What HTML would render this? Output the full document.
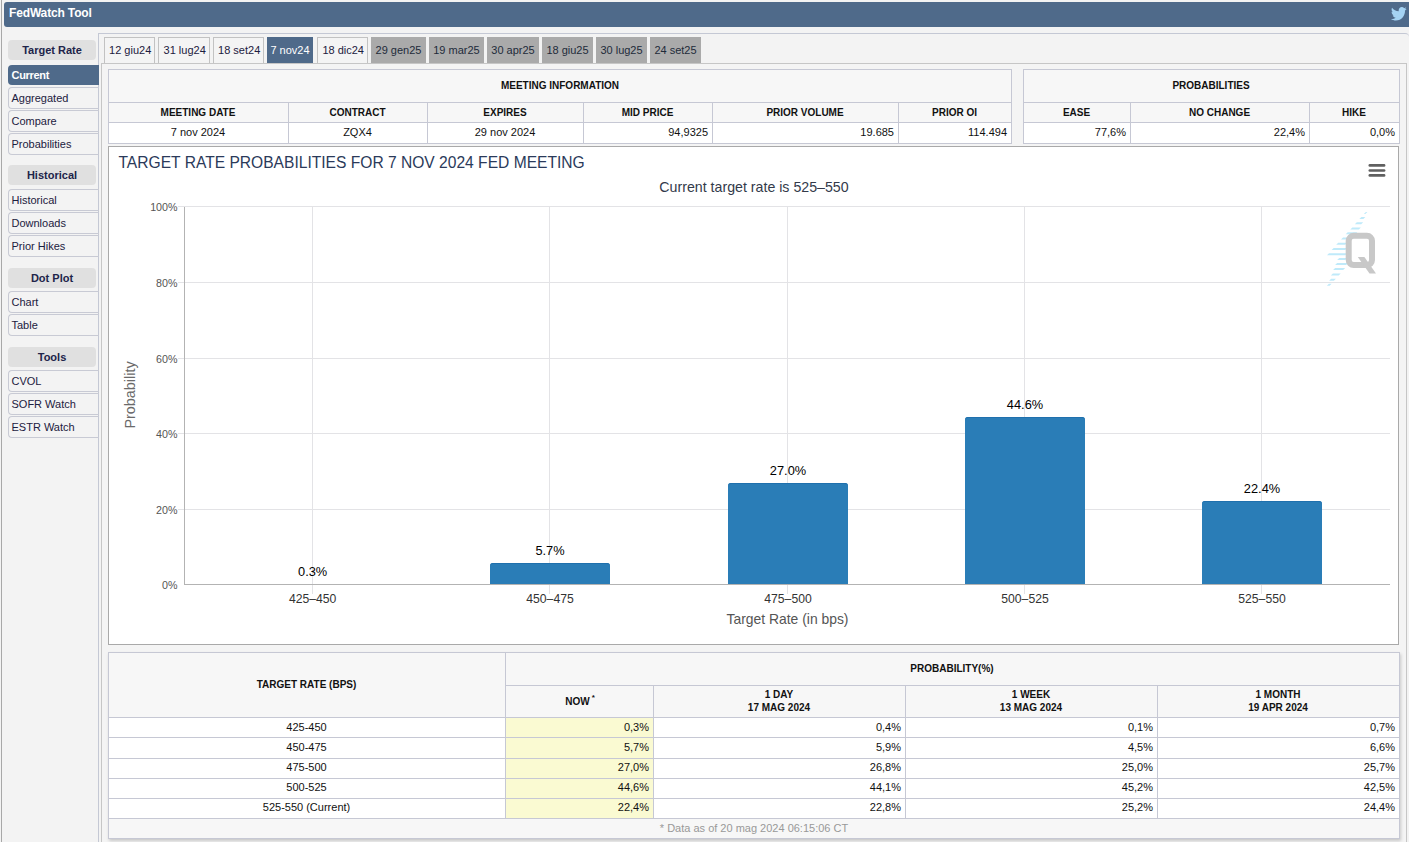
<!DOCTYPE html><html><head><meta charset="utf-8"><style>
html,body{margin:0;padding:0;}
body{width:1409px;height:842px;overflow:hidden;position:relative;background:#f3f3f3;font-family:"Liberation Sans",sans-serif;}
</style></head><body>
<div style="position:absolute;left:1px;top:0px;width:1px;height:842px;background:#a8a8a8"></div>
<div style="position:absolute;left:4px;top:2px;width:1405px;height:25px;background:#4f6a8a;border-radius:3px 0 0 3px"></div>
<div style="position:absolute;left:9.00px;top:-7.00px;width:400px;height:40px;line-height:40px;font-size:12px;font-weight:bold;color:#fff;text-align:left;white-space:nowrap;font-family:'Liberation Sans', sans-serif;letter-spacing:-0.15px">FedWatch Tool</div>
<svg style="position:absolute;left:1391px;top:7px" width="16" height="14" viewBox="0 0 24 20" preserveAspectRatio="none"><path fill="#a5d3f3" d="M23.6 2.4c-.9.4-1.8.6-2.8.8 1-.6 1.8-1.5 2.1-2.7-.9.6-2 1-3.1 1.2C18.9.7 17.6.1 16.3.1c-2.7 0-4.8 2.2-4.8 4.8 0 .4 0 .8.1 1.1C7.5 5.8 4 3.9 1.6 1 1.2 1.7.9 2.6.9 3.5c0 1.7.9 3.2 2.2 4-.8 0-1.5-.2-2.2-.6v.1c0 2.3 1.7 4.3 3.9 4.7-.4.1-.8.2-1.3.2-.3 0-.6 0-.9-.1.6 1.9 2.4 3.4 4.5 3.4-1.7 1.3-3.7 2.1-6 2.1-.4 0-.8 0-1.2-.1 2.1 1.4 4.7 2.2 7.4 2.2 8.9 0 13.7-7.4 13.7-13.7v-.6c1-.7 1.8-1.6 2.5-2.5z"/></svg>
<div style="position:absolute;left:98px;top:33px;width:1311px;height:900px;box-sizing:border-box;border:1px solid #c4c8d4;border-right:none;border-radius:0 4px 0 0"></div>
<div style="position:absolute;left:8px;top:40px;width:88px;height:20px;background:#e0e0e0;border-radius:4px"></div>
<div style="position:absolute;left:8.00px;top:30.00px;width:88px;height:40px;line-height:40px;font-size:11px;font-weight:bold;color:#20244a;text-align:center;white-space:nowrap;font-family:'Liberation Sans', sans-serif;">Target Rate</div>
<div style="position:absolute;left:8px;top:65px;width:91px;height:20px;background:#4f6a8a;border-radius:4px 0 0 4px"></div>
<div style="position:absolute;left:11.50px;top:55.00px;width:400px;height:40px;line-height:40px;font-size:11px;font-weight:bold;color:#fff;text-align:left;white-space:nowrap;font-family:'Liberation Sans', sans-serif;letter-spacing:-0.3px">Current</div>
<div style="position:absolute;left:8px;top:87px;width:91px;height:22px;box-sizing:border-box;border:1px solid #c8cad4;border-right:none;border-radius:4px 0 0 4px"></div>
<div style="position:absolute;left:11.50px;top:78.00px;width:400px;height:40px;line-height:40px;font-size:11px;font-weight:normal;color:#1c2040;text-align:left;white-space:nowrap;font-family:'Liberation Sans', sans-serif;">Aggregated</div>
<div style="position:absolute;left:8px;top:110px;width:91px;height:22px;box-sizing:border-box;border:1px solid #c8cad4;border-right:none;border-radius:4px 0 0 4px"></div>
<div style="position:absolute;left:11.50px;top:101.00px;width:400px;height:40px;line-height:40px;font-size:11px;font-weight:normal;color:#1c2040;text-align:left;white-space:nowrap;font-family:'Liberation Sans', sans-serif;">Compare</div>
<div style="position:absolute;left:8px;top:133px;width:91px;height:22px;box-sizing:border-box;border:1px solid #c8cad4;border-right:none;border-radius:4px 0 0 4px"></div>
<div style="position:absolute;left:11.50px;top:124.00px;width:400px;height:40px;line-height:40px;font-size:11px;font-weight:normal;color:#1c2040;text-align:left;white-space:nowrap;font-family:'Liberation Sans', sans-serif;">Probabilities</div>
<div style="position:absolute;left:8px;top:165px;width:88px;height:20px;background:#e0e0e0;border-radius:4px"></div>
<div style="position:absolute;left:8.00px;top:155.00px;width:88px;height:40px;line-height:40px;font-size:11px;font-weight:bold;color:#20244a;text-align:center;white-space:nowrap;font-family:'Liberation Sans', sans-serif;">Historical</div>
<div style="position:absolute;left:8px;top:189px;width:91px;height:22px;box-sizing:border-box;border:1px solid #c8cad4;border-right:none;border-radius:4px 0 0 4px"></div>
<div style="position:absolute;left:11.50px;top:180.00px;width:400px;height:40px;line-height:40px;font-size:11px;font-weight:normal;color:#1c2040;text-align:left;white-space:nowrap;font-family:'Liberation Sans', sans-serif;">Historical</div>
<div style="position:absolute;left:8px;top:212px;width:91px;height:22px;box-sizing:border-box;border:1px solid #c8cad4;border-right:none;border-radius:4px 0 0 4px"></div>
<div style="position:absolute;left:11.50px;top:203.00px;width:400px;height:40px;line-height:40px;font-size:11px;font-weight:normal;color:#1c2040;text-align:left;white-space:nowrap;font-family:'Liberation Sans', sans-serif;">Downloads</div>
<div style="position:absolute;left:8px;top:235px;width:91px;height:22px;box-sizing:border-box;border:1px solid #c8cad4;border-right:none;border-radius:4px 0 0 4px"></div>
<div style="position:absolute;left:11.50px;top:226.00px;width:400px;height:40px;line-height:40px;font-size:11px;font-weight:normal;color:#1c2040;text-align:left;white-space:nowrap;font-family:'Liberation Sans', sans-serif;">Prior Hikes</div>
<div style="position:absolute;left:8px;top:268px;width:88px;height:20px;background:#e0e0e0;border-radius:4px"></div>
<div style="position:absolute;left:8.00px;top:258.00px;width:88px;height:40px;line-height:40px;font-size:11px;font-weight:bold;color:#20244a;text-align:center;white-space:nowrap;font-family:'Liberation Sans', sans-serif;">Dot Plot</div>
<div style="position:absolute;left:8px;top:291px;width:91px;height:22px;box-sizing:border-box;border:1px solid #c8cad4;border-right:none;border-radius:4px 0 0 4px"></div>
<div style="position:absolute;left:11.50px;top:282.00px;width:400px;height:40px;line-height:40px;font-size:11px;font-weight:normal;color:#1c2040;text-align:left;white-space:nowrap;font-family:'Liberation Sans', sans-serif;">Chart</div>
<div style="position:absolute;left:8px;top:314px;width:91px;height:22px;box-sizing:border-box;border:1px solid #c8cad4;border-right:none;border-radius:4px 0 0 4px"></div>
<div style="position:absolute;left:11.50px;top:305.00px;width:400px;height:40px;line-height:40px;font-size:11px;font-weight:normal;color:#1c2040;text-align:left;white-space:nowrap;font-family:'Liberation Sans', sans-serif;">Table</div>
<div style="position:absolute;left:8px;top:347px;width:88px;height:20px;background:#e0e0e0;border-radius:4px"></div>
<div style="position:absolute;left:8.00px;top:337.00px;width:88px;height:40px;line-height:40px;font-size:11px;font-weight:bold;color:#20244a;text-align:center;white-space:nowrap;font-family:'Liberation Sans', sans-serif;">Tools</div>
<div style="position:absolute;left:8px;top:370px;width:91px;height:22px;box-sizing:border-box;border:1px solid #c8cad4;border-right:none;border-radius:4px 0 0 4px"></div>
<div style="position:absolute;left:11.50px;top:361.00px;width:400px;height:40px;line-height:40px;font-size:11px;font-weight:normal;color:#1c2040;text-align:left;white-space:nowrap;font-family:'Liberation Sans', sans-serif;">CVOL</div>
<div style="position:absolute;left:8px;top:393px;width:91px;height:22px;box-sizing:border-box;border:1px solid #c8cad4;border-right:none;border-radius:4px 0 0 4px"></div>
<div style="position:absolute;left:11.50px;top:384.00px;width:400px;height:40px;line-height:40px;font-size:11px;font-weight:normal;color:#1c2040;text-align:left;white-space:nowrap;font-family:'Liberation Sans', sans-serif;">SOFR Watch</div>
<div style="position:absolute;left:8px;top:416px;width:91px;height:22px;box-sizing:border-box;border:1px solid #c8cad4;border-right:none;border-radius:4px 0 0 4px"></div>
<div style="position:absolute;left:11.50px;top:407.00px;width:400px;height:40px;line-height:40px;font-size:11px;font-weight:normal;color:#1c2040;text-align:left;white-space:nowrap;font-family:'Liberation Sans', sans-serif;">ESTR Watch</div>
<div style="position:absolute;left:101px;top:63px;width:1306px;height:900px;box-sizing:border-box;border:1px solid #c6c6c6;background:#f4f4f4"></div>
<div style="position:absolute;left:104px;top:37px;width:51px;height:26px;box-sizing:border-box;border:1px solid #c2c2c2;border-bottom:none;background:#f4f4f4"></div>
<div style="position:absolute;left:104.70px;top:30.00px;width:51px;height:40px;line-height:40px;font-size:11px;font-weight:normal;color:#1c2040;text-align:center;white-space:nowrap;font-family:'Liberation Sans', sans-serif;">12 giu24</div>
<div style="position:absolute;left:158px;top:37px;width:52px;height:26px;box-sizing:border-box;border:1px solid #c2c2c2;border-bottom:none;background:#f4f4f4"></div>
<div style="position:absolute;left:158.70px;top:30.00px;width:52px;height:40px;line-height:40px;font-size:11px;font-weight:normal;color:#1c2040;text-align:center;white-space:nowrap;font-family:'Liberation Sans', sans-serif;">31 lug24</div>
<div style="position:absolute;left:213px;top:37px;width:51px;height:26px;box-sizing:border-box;border:1px solid #c2c2c2;border-bottom:none;background:#f4f4f4"></div>
<div style="position:absolute;left:213.70px;top:30.00px;width:51px;height:40px;line-height:40px;font-size:11px;font-weight:normal;color:#1c2040;text-align:center;white-space:nowrap;font-family:'Liberation Sans', sans-serif;">18 set24</div>
<div style="position:absolute;left:267px;top:37px;width:46px;height:26px;background:#4f6a8a"></div>
<div style="position:absolute;left:267.00px;top:30.00px;width:46px;height:40px;line-height:40px;font-size:11px;font-weight:normal;color:#fff;text-align:center;white-space:nowrap;font-family:'Liberation Sans', sans-serif;">7 nov24</div>
<div style="position:absolute;left:317px;top:37px;width:51px;height:26px;box-sizing:border-box;border:1px solid #c2c2c2;border-bottom:none;background:#f4f4f4"></div>
<div style="position:absolute;left:317.70px;top:30.00px;width:51px;height:40px;line-height:40px;font-size:11px;font-weight:normal;color:#1c2040;text-align:center;white-space:nowrap;font-family:'Liberation Sans', sans-serif;">18 dic24</div>
<div style="position:absolute;left:371px;top:37px;width:55px;height:26px;background:#aaaaaa"></div>
<div style="position:absolute;left:371.00px;top:30.00px;width:55px;height:40px;line-height:40px;font-size:11px;font-weight:normal;color:#1e2a3a;text-align:center;white-space:nowrap;font-family:'Liberation Sans', sans-serif;">29 gen25</div>
<div style="position:absolute;left:429px;top:37px;width:55px;height:26px;background:#aaaaaa"></div>
<div style="position:absolute;left:429.00px;top:30.00px;width:55px;height:40px;line-height:40px;font-size:11px;font-weight:normal;color:#1e2a3a;text-align:center;white-space:nowrap;font-family:'Liberation Sans', sans-serif;">19 mar25</div>
<div style="position:absolute;left:487px;top:37px;width:52px;height:26px;background:#aaaaaa"></div>
<div style="position:absolute;left:487.00px;top:30.00px;width:52px;height:40px;line-height:40px;font-size:11px;font-weight:normal;color:#1e2a3a;text-align:center;white-space:nowrap;font-family:'Liberation Sans', sans-serif;">30 apr25</div>
<div style="position:absolute;left:542px;top:37px;width:51px;height:26px;background:#aaaaaa"></div>
<div style="position:absolute;left:542.00px;top:30.00px;width:51px;height:40px;line-height:40px;font-size:11px;font-weight:normal;color:#1e2a3a;text-align:center;white-space:nowrap;font-family:'Liberation Sans', sans-serif;">18 giu25</div>
<div style="position:absolute;left:596px;top:37px;width:51px;height:26px;background:#aaaaaa"></div>
<div style="position:absolute;left:596.00px;top:30.00px;width:51px;height:40px;line-height:40px;font-size:11px;font-weight:normal;color:#1e2a3a;text-align:center;white-space:nowrap;font-family:'Liberation Sans', sans-serif;">30 lug25</div>
<div style="position:absolute;left:650px;top:37px;width:51px;height:26px;background:#aaaaaa"></div>
<div style="position:absolute;left:650.00px;top:30.00px;width:51px;height:40px;line-height:40px;font-size:11px;font-weight:normal;color:#1e2a3a;text-align:center;white-space:nowrap;font-family:'Liberation Sans', sans-serif;">24 set25</div>
<div style="position:absolute;left:108px;top:69px;width:904px;height:75px;background:#f7f7f7"></div>
<div style="position:absolute;left:109px;top:123px;width:902px;height:20px;background:#fff"></div>
<div style="position:absolute;left:108px;top:69px;width:904px;height:1px;background:#c6c8d4"></div>
<div style="position:absolute;left:108px;top:102px;width:904px;height:1px;background:#c6c8d4"></div>
<div style="position:absolute;left:108px;top:122px;width:904px;height:1px;background:#c6c8d4"></div>
<div style="position:absolute;left:108px;top:143px;width:904px;height:1px;background:#c6c8d4"></div>
<div style="position:absolute;left:108px;top:69px;width:1px;height:75px;background:#c6c8d4"></div>
<div style="position:absolute;left:1011px;top:69px;width:1px;height:75px;background:#c6c8d4"></div>
<div style="position:absolute;left:288px;top:102px;width:1px;height:42px;background:#c6c8d4"></div>
<div style="position:absolute;left:427px;top:102px;width:1px;height:42px;background:#c6c8d4"></div>
<div style="position:absolute;left:583px;top:102px;width:1px;height:42px;background:#c6c8d4"></div>
<div style="position:absolute;left:712px;top:102px;width:1px;height:42px;background:#c6c8d4"></div>
<div style="position:absolute;left:898px;top:102px;width:1px;height:42px;background:#c6c8d4"></div>
<div style="position:absolute;left:360.00px;top:65.50px;width:400px;height:40px;line-height:40px;font-size:10px;font-weight:bold;color:#111;text-align:center;white-space:nowrap;font-family:'Liberation Sans', sans-serif;">MEETING INFORMATION</div>
<div style="position:absolute;left:-2.00px;top:92.50px;width:400px;height:40px;line-height:40px;font-size:10px;font-weight:bold;color:#111;text-align:center;white-space:nowrap;font-family:'Liberation Sans', sans-serif;">MEETING DATE</div>
<div style="position:absolute;left:-2.00px;top:112.00px;width:400px;height:40px;line-height:40px;font-size:11px;font-weight:normal;color:#111;text-align:center;white-space:nowrap;font-family:'Liberation Sans', sans-serif;">7 nov 2024</div>
<div style="position:absolute;left:157.50px;top:92.50px;width:400px;height:40px;line-height:40px;font-size:10px;font-weight:bold;color:#111;text-align:center;white-space:nowrap;font-family:'Liberation Sans', sans-serif;">CONTRACT</div>
<div style="position:absolute;left:157.50px;top:112.00px;width:400px;height:40px;line-height:40px;font-size:11px;font-weight:normal;color:#111;text-align:center;white-space:nowrap;font-family:'Liberation Sans', sans-serif;">ZQX4</div>
<div style="position:absolute;left:305.00px;top:92.50px;width:400px;height:40px;line-height:40px;font-size:10px;font-weight:bold;color:#111;text-align:center;white-space:nowrap;font-family:'Liberation Sans', sans-serif;">EXPIRES</div>
<div style="position:absolute;left:305.00px;top:112.00px;width:400px;height:40px;line-height:40px;font-size:11px;font-weight:normal;color:#111;text-align:center;white-space:nowrap;font-family:'Liberation Sans', sans-serif;">29 nov 2024</div>
<div style="position:absolute;left:447.50px;top:92.50px;width:400px;height:40px;line-height:40px;font-size:10px;font-weight:bold;color:#111;text-align:center;white-space:nowrap;font-family:'Liberation Sans', sans-serif;">MID PRICE</div>
<div style="position:absolute;left:308.00px;top:112.00px;width:400px;height:40px;line-height:40px;font-size:11px;font-weight:normal;color:#111;text-align:right;white-space:nowrap;font-family:'Liberation Sans', sans-serif;">94,9325</div>
<div style="position:absolute;left:605.00px;top:92.50px;width:400px;height:40px;line-height:40px;font-size:10px;font-weight:bold;color:#111;text-align:center;white-space:nowrap;font-family:'Liberation Sans', sans-serif;">PRIOR VOLUME</div>
<div style="position:absolute;left:494.00px;top:112.00px;width:400px;height:40px;line-height:40px;font-size:11px;font-weight:normal;color:#111;text-align:right;white-space:nowrap;font-family:'Liberation Sans', sans-serif;">19.685</div>
<div style="position:absolute;left:754.50px;top:92.50px;width:400px;height:40px;line-height:40px;font-size:10px;font-weight:bold;color:#111;text-align:center;white-space:nowrap;font-family:'Liberation Sans', sans-serif;">PRIOR OI</div>
<div style="position:absolute;left:607.00px;top:112.00px;width:400px;height:40px;line-height:40px;font-size:11px;font-weight:normal;color:#111;text-align:right;white-space:nowrap;font-family:'Liberation Sans', sans-serif;">114.494</div>
<div style="position:absolute;left:1023px;top:69px;width:377px;height:75px;background:#f7f7f7"></div>
<div style="position:absolute;left:1024px;top:123px;width:375px;height:20px;background:#fff"></div>
<div style="position:absolute;left:1023px;top:69px;width:377px;height:1px;background:#c6c8d4"></div>
<div style="position:absolute;left:1023px;top:102px;width:377px;height:1px;background:#c6c8d4"></div>
<div style="position:absolute;left:1023px;top:122px;width:377px;height:1px;background:#c6c8d4"></div>
<div style="position:absolute;left:1023px;top:143px;width:377px;height:1px;background:#c6c8d4"></div>
<div style="position:absolute;left:1023px;top:69px;width:1px;height:75px;background:#c6c8d4"></div>
<div style="position:absolute;left:1399px;top:69px;width:1px;height:75px;background:#c6c8d4"></div>
<div style="position:absolute;left:1130px;top:102px;width:1px;height:42px;background:#c6c8d4"></div>
<div style="position:absolute;left:1309px;top:102px;width:1px;height:42px;background:#c6c8d4"></div>
<div style="position:absolute;left:1011.00px;top:65.50px;width:400px;height:40px;line-height:40px;font-size:10px;font-weight:bold;color:#111;text-align:center;white-space:nowrap;font-family:'Liberation Sans', sans-serif;">PROBABILITIES</div>
<div style="position:absolute;left:876.50px;top:92.50px;width:400px;height:40px;line-height:40px;font-size:10px;font-weight:bold;color:#111;text-align:center;white-space:nowrap;font-family:'Liberation Sans', sans-serif;">EASE</div>
<div style="position:absolute;left:726.00px;top:112.00px;width:400px;height:40px;line-height:40px;font-size:11px;font-weight:normal;color:#111;text-align:right;white-space:nowrap;font-family:'Liberation Sans', sans-serif;">77,6%</div>
<div style="position:absolute;left:1019.50px;top:92.50px;width:400px;height:40px;line-height:40px;font-size:10px;font-weight:bold;color:#111;text-align:center;white-space:nowrap;font-family:'Liberation Sans', sans-serif;">NO CHANGE</div>
<div style="position:absolute;left:905.00px;top:112.00px;width:400px;height:40px;line-height:40px;font-size:11px;font-weight:normal;color:#111;text-align:right;white-space:nowrap;font-family:'Liberation Sans', sans-serif;">22,4%</div>
<div style="position:absolute;left:1154.00px;top:92.50px;width:400px;height:40px;line-height:40px;font-size:10px;font-weight:bold;color:#111;text-align:center;white-space:nowrap;font-family:'Liberation Sans', sans-serif;">HIKE</div>
<div style="position:absolute;left:995.00px;top:112.00px;width:400px;height:40px;line-height:40px;font-size:11px;font-weight:normal;color:#111;text-align:right;white-space:nowrap;font-family:'Liberation Sans', sans-serif;">0,0%</div>
<div style="position:absolute;left:108px;top:146px;width:1291px;height:499px;box-sizing:border-box;border:1px solid #a9a9a9;background:#fff"></div>
<div style="position:absolute;left:178px;top:206px;width:1212px;height:1px;background:#e3e3e6"></div>
<div style="position:absolute;left:178px;top:282px;width:1212px;height:1px;background:#e3e3e6"></div>
<div style="position:absolute;left:178px;top:358px;width:1212px;height:1px;background:#e3e3e6"></div>
<div style="position:absolute;left:178px;top:433px;width:1212px;height:1px;background:#e3e3e6"></div>
<div style="position:absolute;left:178px;top:509px;width:1212px;height:1px;background:#e3e3e6"></div>
<div style="position:absolute;left:312px;top:207px;width:1px;height:387px;background:#e3e3e6"></div>
<div style="position:absolute;left:549px;top:207px;width:1px;height:387px;background:#e3e3e6"></div>
<div style="position:absolute;left:787px;top:207px;width:1px;height:387px;background:#e3e3e6"></div>
<div style="position:absolute;left:1024px;top:207px;width:1px;height:387px;background:#e3e3e6"></div>
<div style="position:absolute;left:1261px;top:207px;width:1px;height:387px;background:#e3e3e6"></div>
<div style="position:absolute;left:184px;top:207px;width:1px;height:378px;background:#b3b3b3"></div>
<div style="position:absolute;left:184px;top:584px;width:1206px;height:1px;background:#b3b3b3"></div>
<div style="position:absolute;left:-222.50px;top:186.50px;width:400px;height:40px;line-height:40px;font-size:10.7px;font-weight:normal;color:#555;text-align:right;white-space:nowrap;font-family:'Liberation Sans', sans-serif;">100%</div>
<div style="position:absolute;left:-222.50px;top:262.50px;width:400px;height:40px;line-height:40px;font-size:10.7px;font-weight:normal;color:#555;text-align:right;white-space:nowrap;font-family:'Liberation Sans', sans-serif;">80%</div>
<div style="position:absolute;left:-222.50px;top:338.50px;width:400px;height:40px;line-height:40px;font-size:10.7px;font-weight:normal;color:#555;text-align:right;white-space:nowrap;font-family:'Liberation Sans', sans-serif;">60%</div>
<div style="position:absolute;left:-222.50px;top:413.50px;width:400px;height:40px;line-height:40px;font-size:10.7px;font-weight:normal;color:#555;text-align:right;white-space:nowrap;font-family:'Liberation Sans', sans-serif;">40%</div>
<div style="position:absolute;left:-222.50px;top:489.50px;width:400px;height:40px;line-height:40px;font-size:10.7px;font-weight:normal;color:#555;text-align:right;white-space:nowrap;font-family:'Liberation Sans', sans-serif;">20%</div>
<div style="position:absolute;left:-222.50px;top:564.50px;width:400px;height:40px;line-height:40px;font-size:10.7px;font-weight:normal;color:#555;text-align:right;white-space:nowrap;font-family:'Liberation Sans', sans-serif;">0%</div>
<div style="position:absolute;left:112.67px;top:551.60px;width:400px;height:40px;line-height:40px;font-size:12.8px;font-weight:normal;color:#000;text-align:center;white-space:nowrap;font-family:'Liberation Sans', sans-serif;">0.3%</div>
<div style="position:absolute;left:490px;top:563px;width:120px;height:21px;background:#2a7db7;border-radius:3px 3px 0 0;box-shadow:inset 0 1px 0 #1f70ad"></div>
<div style="position:absolute;left:350.00px;top:531.20px;width:400px;height:40px;line-height:40px;font-size:12.8px;font-weight:normal;color:#000;text-align:center;white-space:nowrap;font-family:'Liberation Sans', sans-serif;">5.7%</div>
<div style="position:absolute;left:728px;top:483px;width:120px;height:101px;background:#2a7db7;border-radius:3px 3px 0 0;box-shadow:inset 0 1px 0 #1f70ad"></div>
<div style="position:absolute;left:588.00px;top:451.40px;width:400px;height:40px;line-height:40px;font-size:12.8px;font-weight:normal;color:#000;text-align:center;white-space:nowrap;font-family:'Liberation Sans', sans-serif;">27.0%</div>
<div style="position:absolute;left:965px;top:417px;width:120px;height:167px;background:#2a7db7;border-radius:3px 3px 0 0;box-shadow:inset 0 1px 0 #1f70ad"></div>
<div style="position:absolute;left:825.00px;top:385.20px;width:400px;height:40px;line-height:40px;font-size:12.8px;font-weight:normal;color:#000;text-align:center;white-space:nowrap;font-family:'Liberation Sans', sans-serif;">44.6%</div>
<div style="position:absolute;left:1202px;top:501px;width:120px;height:83px;background:#2a7db7;border-radius:3px 3px 0 0;box-shadow:inset 0 1px 0 #1f70ad"></div>
<div style="position:absolute;left:1062.00px;top:468.80px;width:400px;height:40px;line-height:40px;font-size:12.8px;font-weight:normal;color:#000;text-align:center;white-space:nowrap;font-family:'Liberation Sans', sans-serif;">22.4%</div>
<div style="position:absolute;left:112.67px;top:579.30px;width:400px;height:40px;line-height:40px;font-size:12.2px;font-weight:normal;color:#333;text-align:center;white-space:nowrap;font-family:'Liberation Sans', sans-serif;">425–450</div>
<div style="position:absolute;left:350.00px;top:579.30px;width:400px;height:40px;line-height:40px;font-size:12.2px;font-weight:normal;color:#333;text-align:center;white-space:nowrap;font-family:'Liberation Sans', sans-serif;">450–475</div>
<div style="position:absolute;left:588.00px;top:579.30px;width:400px;height:40px;line-height:40px;font-size:12.2px;font-weight:normal;color:#333;text-align:center;white-space:nowrap;font-family:'Liberation Sans', sans-serif;">475–500</div>
<div style="position:absolute;left:825.00px;top:579.30px;width:400px;height:40px;line-height:40px;font-size:12.2px;font-weight:normal;color:#333;text-align:center;white-space:nowrap;font-family:'Liberation Sans', sans-serif;">500–525</div>
<div style="position:absolute;left:1062.00px;top:579.30px;width:400px;height:40px;line-height:40px;font-size:12.2px;font-weight:normal;color:#333;text-align:center;white-space:nowrap;font-family:'Liberation Sans', sans-serif;">525–550</div>
<div style="position:absolute;left:587.50px;top:598.50px;width:400px;height:40px;line-height:40px;font-size:13.9px;font-weight:normal;color:#555;text-align:center;white-space:nowrap;font-family:'Liberation Sans', sans-serif;">Target Rate (in bps)</div>
<div style="position:absolute;left:29.5px;top:375.3px;width:200px;height:40px;line-height:40px;text-align:center;font-size:14.4px;color:#6a6a6a;font-family:'Liberation Sans', sans-serif;transform:rotate(-90deg);white-space:nowrap">Probability</div>
<div style="position:absolute;left:118.50px;top:143.00px;width:600px;height:40px;line-height:40px;font-size:15.6px;font-weight:normal;color:#2b3a5a;text-align:left;white-space:nowrap;font-family:'Liberation Sans', sans-serif;">TARGET RATE PROBABILITIES FOR 7 NOV 2024 FED MEETING</div>
<div style="position:absolute;left:554.00px;top:166.80px;width:400px;height:40px;line-height:40px;font-size:14.2px;font-weight:normal;color:#333a4a;text-align:center;white-space:nowrap;font-family:'Liberation Sans', sans-serif;">Current target rate is 525–550</div>
<svg style="position:absolute;left:1360px;top:158px" width="32" height="24" viewBox="0 0 32 24"><g stroke="#606060" stroke-width="2.6" stroke-linecap="round"><line x1="9.8" y1="7.4" x2="24.1" y2="7.4"/><line x1="9.8" y1="12.5" x2="24.1" y2="12.5"/><line x1="9.8" y1="17.4" x2="24.1" y2="17.4"/></g></svg>
<svg style="position:absolute;left:1320px;top:205px" width="65" height="85" viewBox="0 0 65 85">
<g fill="#bfeafa"><polygon points="45.9,7.1 47.4,7.1 45.4,9.1 43.9,9.1"/><polygon points="41.4,11.9 45.4,11.9 43.4,13.9 39.4,13.9"/><polygon points="36.8,17.2 43.2,17.2 41.2,19.2 34.8,19.2"/><polygon points="32.3,22.4 40.9,22.4 38.9,24.4 30.3,24.4"/><polygon points="27.7,27.3 37.3,27.3 35.3,29.3 25.7,29.3"/><polygon points="23.0,32.6 31.3,32.6 29.3,34.6 21.0,34.6"/><polygon points="18.2,37.7 27.2,37.7 25.2,39.7 16.2,39.7"/><polygon points="13.6,42.9 27.2,42.9 25.2,44.9 11.6,44.9"/><polygon points="9.0,48.2 27.2,48.2 25.2,50.2 7.0,50.2"/><polygon points="19.2,53.0 27.2,53.0 25.2,55.0 17.2,55.0"/><polygon points="17.1,58.0 28.2,58.0 26.2,60.0 15.1,60.0"/><polygon points="15.1,63.1 25.2,63.1 23.2,65.1 13.1,65.1"/><polygon points="12.9,68.4 20.7,68.4 18.7,70.4 10.9,70.4"/><polygon points="11.1,73.7 15.9,73.7 13.9,75.7 9.1,75.7"/><polygon points="8.9,78.7 11.6,78.7 9.6,80.7 6.9,80.7"/></g>
<rect x="28.7" y="30.8" width="23.3" height="29.3" rx="5" ry="5" fill="none" stroke="#c8c8c8" stroke-width="6"/>
<polygon points="37.8,52 44.4,52 56,68.6 49.5,68.6" fill="#c8c8c8"/>
</svg>
<div style="position:absolute;left:108px;top:652px;width:1292px;height:187px;box-shadow:1px 2px 3px rgba(0,0,0,0.18)"></div>
<div style="position:absolute;left:108px;top:652px;width:1292px;height:66px;background:#f7f7f7"></div>
<div style="position:absolute;left:108px;top:718px;width:1292px;height:101px;background:#fff"></div>
<div style="position:absolute;left:506px;top:718px;width:147px;height:100px;background:#fafad2"></div>
<div style="position:absolute;left:108px;top:819px;width:1292px;height:20px;background:#f7f7f7"></div>
<div style="position:absolute;left:108px;top:652px;width:1292px;height:1px;background:#c6c8d4"></div>
<div style="position:absolute;left:108px;top:717px;width:1292px;height:1px;background:#c6c8d4"></div>
<div style="position:absolute;left:108px;top:737px;width:1292px;height:1px;background:#c6c8d4"></div>
<div style="position:absolute;left:108px;top:758px;width:1292px;height:1px;background:#c6c8d4"></div>
<div style="position:absolute;left:108px;top:778px;width:1292px;height:1px;background:#c6c8d4"></div>
<div style="position:absolute;left:108px;top:798px;width:1292px;height:1px;background:#c6c8d4"></div>
<div style="position:absolute;left:108px;top:818px;width:1292px;height:1px;background:#c6c8d4"></div>
<div style="position:absolute;left:108px;top:838px;width:1292px;height:1px;background:#c6c8d4"></div>
<div style="position:absolute;left:505px;top:685px;width:895px;height:1px;background:#c6c8d4"></div>
<div style="position:absolute;left:108px;top:652px;width:1px;height:187px;background:#c6c8d4"></div>
<div style="position:absolute;left:1399px;top:652px;width:1px;height:187px;background:#c6c8d4"></div>
<div style="position:absolute;left:505px;top:652px;width:1px;height:167px;background:#c6c8d4"></div>
<div style="position:absolute;left:653px;top:685px;width:1px;height:134px;background:#c6c8d4"></div>
<div style="position:absolute;left:905px;top:685px;width:1px;height:134px;background:#c6c8d4"></div>
<div style="position:absolute;left:1157px;top:685px;width:1px;height:134px;background:#c6c8d4"></div>
<div style="position:absolute;left:106.50px;top:664.90px;width:400px;height:40px;line-height:40px;font-size:10px;font-weight:bold;color:#111;text-align:center;white-space:nowrap;font-family:'Liberation Sans', sans-serif;">TARGET RATE (BPS)</div>
<div style="position:absolute;left:752.00px;top:648.50px;width:400px;height:40px;line-height:40px;font-size:10px;font-weight:bold;color:#111;text-align:center;white-space:nowrap;font-family:'Liberation Sans', sans-serif;">PROBABILITY(%)</div>
<div style="position:absolute;left:379.00px;top:681.50px;width:400px;height:40px;line-height:40px;font-size:10px;font-weight:bold;color:#111;text-align:center;white-space:nowrap;font-family:'Liberation Sans', sans-serif;">NOW<span style="font-size:8px;position:relative;top:-5px;left:2px">*</span></div>
<div style="position:absolute;left:579.00px;top:675.00px;width:400px;height:40px;line-height:40px;font-size:10px;font-weight:bold;color:#111;text-align:center;white-space:nowrap;font-family:'Liberation Sans', sans-serif;">1 DAY</div>
<div style="position:absolute;left:579.00px;top:688.00px;width:400px;height:40px;line-height:40px;font-size:10px;font-weight:bold;color:#111;text-align:center;white-space:nowrap;font-family:'Liberation Sans', sans-serif;">17 MAG 2024</div>
<div style="position:absolute;left:831.00px;top:675.00px;width:400px;height:40px;line-height:40px;font-size:10px;font-weight:bold;color:#111;text-align:center;white-space:nowrap;font-family:'Liberation Sans', sans-serif;">1 WEEK</div>
<div style="position:absolute;left:831.00px;top:688.00px;width:400px;height:40px;line-height:40px;font-size:10px;font-weight:bold;color:#111;text-align:center;white-space:nowrap;font-family:'Liberation Sans', sans-serif;">13 MAG 2024</div>
<div style="position:absolute;left:1078.00px;top:675.00px;width:400px;height:40px;line-height:40px;font-size:10px;font-weight:bold;color:#111;text-align:center;white-space:nowrap;font-family:'Liberation Sans', sans-serif;">1 MONTH</div>
<div style="position:absolute;left:1078.00px;top:688.00px;width:400px;height:40px;line-height:40px;font-size:10px;font-weight:bold;color:#111;text-align:center;white-space:nowrap;font-family:'Liberation Sans', sans-serif;">19 APR 2024</div>
<div style="position:absolute;left:106.50px;top:706.50px;width:400px;height:40px;line-height:40px;font-size:11px;font-weight:normal;color:#111;text-align:center;white-space:nowrap;font-family:'Liberation Sans', sans-serif;">425-450</div>
<div style="position:absolute;left:249.00px;top:706.50px;width:400px;height:40px;line-height:40px;font-size:11px;font-weight:normal;color:#111;text-align:right;white-space:nowrap;font-family:'Liberation Sans', sans-serif;">0,3%</div>
<div style="position:absolute;left:501.00px;top:706.50px;width:400px;height:40px;line-height:40px;font-size:11px;font-weight:normal;color:#111;text-align:right;white-space:nowrap;font-family:'Liberation Sans', sans-serif;">0,4%</div>
<div style="position:absolute;left:753.00px;top:706.50px;width:400px;height:40px;line-height:40px;font-size:11px;font-weight:normal;color:#111;text-align:right;white-space:nowrap;font-family:'Liberation Sans', sans-serif;">0,1%</div>
<div style="position:absolute;left:995.00px;top:706.50px;width:400px;height:40px;line-height:40px;font-size:11px;font-weight:normal;color:#111;text-align:right;white-space:nowrap;font-family:'Liberation Sans', sans-serif;">0,7%</div>
<div style="position:absolute;left:106.50px;top:726.60px;width:400px;height:40px;line-height:40px;font-size:11px;font-weight:normal;color:#111;text-align:center;white-space:nowrap;font-family:'Liberation Sans', sans-serif;">450-475</div>
<div style="position:absolute;left:249.00px;top:726.60px;width:400px;height:40px;line-height:40px;font-size:11px;font-weight:normal;color:#111;text-align:right;white-space:nowrap;font-family:'Liberation Sans', sans-serif;">5,7%</div>
<div style="position:absolute;left:501.00px;top:726.60px;width:400px;height:40px;line-height:40px;font-size:11px;font-weight:normal;color:#111;text-align:right;white-space:nowrap;font-family:'Liberation Sans', sans-serif;">5,9%</div>
<div style="position:absolute;left:753.00px;top:726.60px;width:400px;height:40px;line-height:40px;font-size:11px;font-weight:normal;color:#111;text-align:right;white-space:nowrap;font-family:'Liberation Sans', sans-serif;">4,5%</div>
<div style="position:absolute;left:995.00px;top:726.60px;width:400px;height:40px;line-height:40px;font-size:11px;font-weight:normal;color:#111;text-align:right;white-space:nowrap;font-family:'Liberation Sans', sans-serif;">6,6%</div>
<div style="position:absolute;left:106.50px;top:746.70px;width:400px;height:40px;line-height:40px;font-size:11px;font-weight:normal;color:#111;text-align:center;white-space:nowrap;font-family:'Liberation Sans', sans-serif;">475-500</div>
<div style="position:absolute;left:249.00px;top:746.70px;width:400px;height:40px;line-height:40px;font-size:11px;font-weight:normal;color:#111;text-align:right;white-space:nowrap;font-family:'Liberation Sans', sans-serif;">27,0%</div>
<div style="position:absolute;left:501.00px;top:746.70px;width:400px;height:40px;line-height:40px;font-size:11px;font-weight:normal;color:#111;text-align:right;white-space:nowrap;font-family:'Liberation Sans', sans-serif;">26,8%</div>
<div style="position:absolute;left:753.00px;top:746.70px;width:400px;height:40px;line-height:40px;font-size:11px;font-weight:normal;color:#111;text-align:right;white-space:nowrap;font-family:'Liberation Sans', sans-serif;">25,0%</div>
<div style="position:absolute;left:995.00px;top:746.70px;width:400px;height:40px;line-height:40px;font-size:11px;font-weight:normal;color:#111;text-align:right;white-space:nowrap;font-family:'Liberation Sans', sans-serif;">25,7%</div>
<div style="position:absolute;left:106.50px;top:766.80px;width:400px;height:40px;line-height:40px;font-size:11px;font-weight:normal;color:#111;text-align:center;white-space:nowrap;font-family:'Liberation Sans', sans-serif;">500-525</div>
<div style="position:absolute;left:249.00px;top:766.80px;width:400px;height:40px;line-height:40px;font-size:11px;font-weight:normal;color:#111;text-align:right;white-space:nowrap;font-family:'Liberation Sans', sans-serif;">44,6%</div>
<div style="position:absolute;left:501.00px;top:766.80px;width:400px;height:40px;line-height:40px;font-size:11px;font-weight:normal;color:#111;text-align:right;white-space:nowrap;font-family:'Liberation Sans', sans-serif;">44,1%</div>
<div style="position:absolute;left:753.00px;top:766.80px;width:400px;height:40px;line-height:40px;font-size:11px;font-weight:normal;color:#111;text-align:right;white-space:nowrap;font-family:'Liberation Sans', sans-serif;">45,2%</div>
<div style="position:absolute;left:995.00px;top:766.80px;width:400px;height:40px;line-height:40px;font-size:11px;font-weight:normal;color:#111;text-align:right;white-space:nowrap;font-family:'Liberation Sans', sans-serif;">42,5%</div>
<div style="position:absolute;left:106.50px;top:786.90px;width:400px;height:40px;line-height:40px;font-size:11px;font-weight:normal;color:#111;text-align:center;white-space:nowrap;font-family:'Liberation Sans', sans-serif;">525-550 (Current)</div>
<div style="position:absolute;left:249.00px;top:786.90px;width:400px;height:40px;line-height:40px;font-size:11px;font-weight:normal;color:#111;text-align:right;white-space:nowrap;font-family:'Liberation Sans', sans-serif;">22,4%</div>
<div style="position:absolute;left:501.00px;top:786.90px;width:400px;height:40px;line-height:40px;font-size:11px;font-weight:normal;color:#111;text-align:right;white-space:nowrap;font-family:'Liberation Sans', sans-serif;">22,8%</div>
<div style="position:absolute;left:753.00px;top:786.90px;width:400px;height:40px;line-height:40px;font-size:11px;font-weight:normal;color:#111;text-align:right;white-space:nowrap;font-family:'Liberation Sans', sans-serif;">25,2%</div>
<div style="position:absolute;left:995.00px;top:786.90px;width:400px;height:40px;line-height:40px;font-size:11px;font-weight:normal;color:#111;text-align:right;white-space:nowrap;font-family:'Liberation Sans', sans-serif;">24,4%</div>
<div style="position:absolute;left:554.00px;top:808.00px;width:400px;height:40px;line-height:40px;font-size:11px;font-weight:normal;color:#999;text-align:center;white-space:nowrap;font-family:'Liberation Sans', sans-serif;">* Data as of 20 mag 2024 06:15:06 CT</div>
</body></html>
